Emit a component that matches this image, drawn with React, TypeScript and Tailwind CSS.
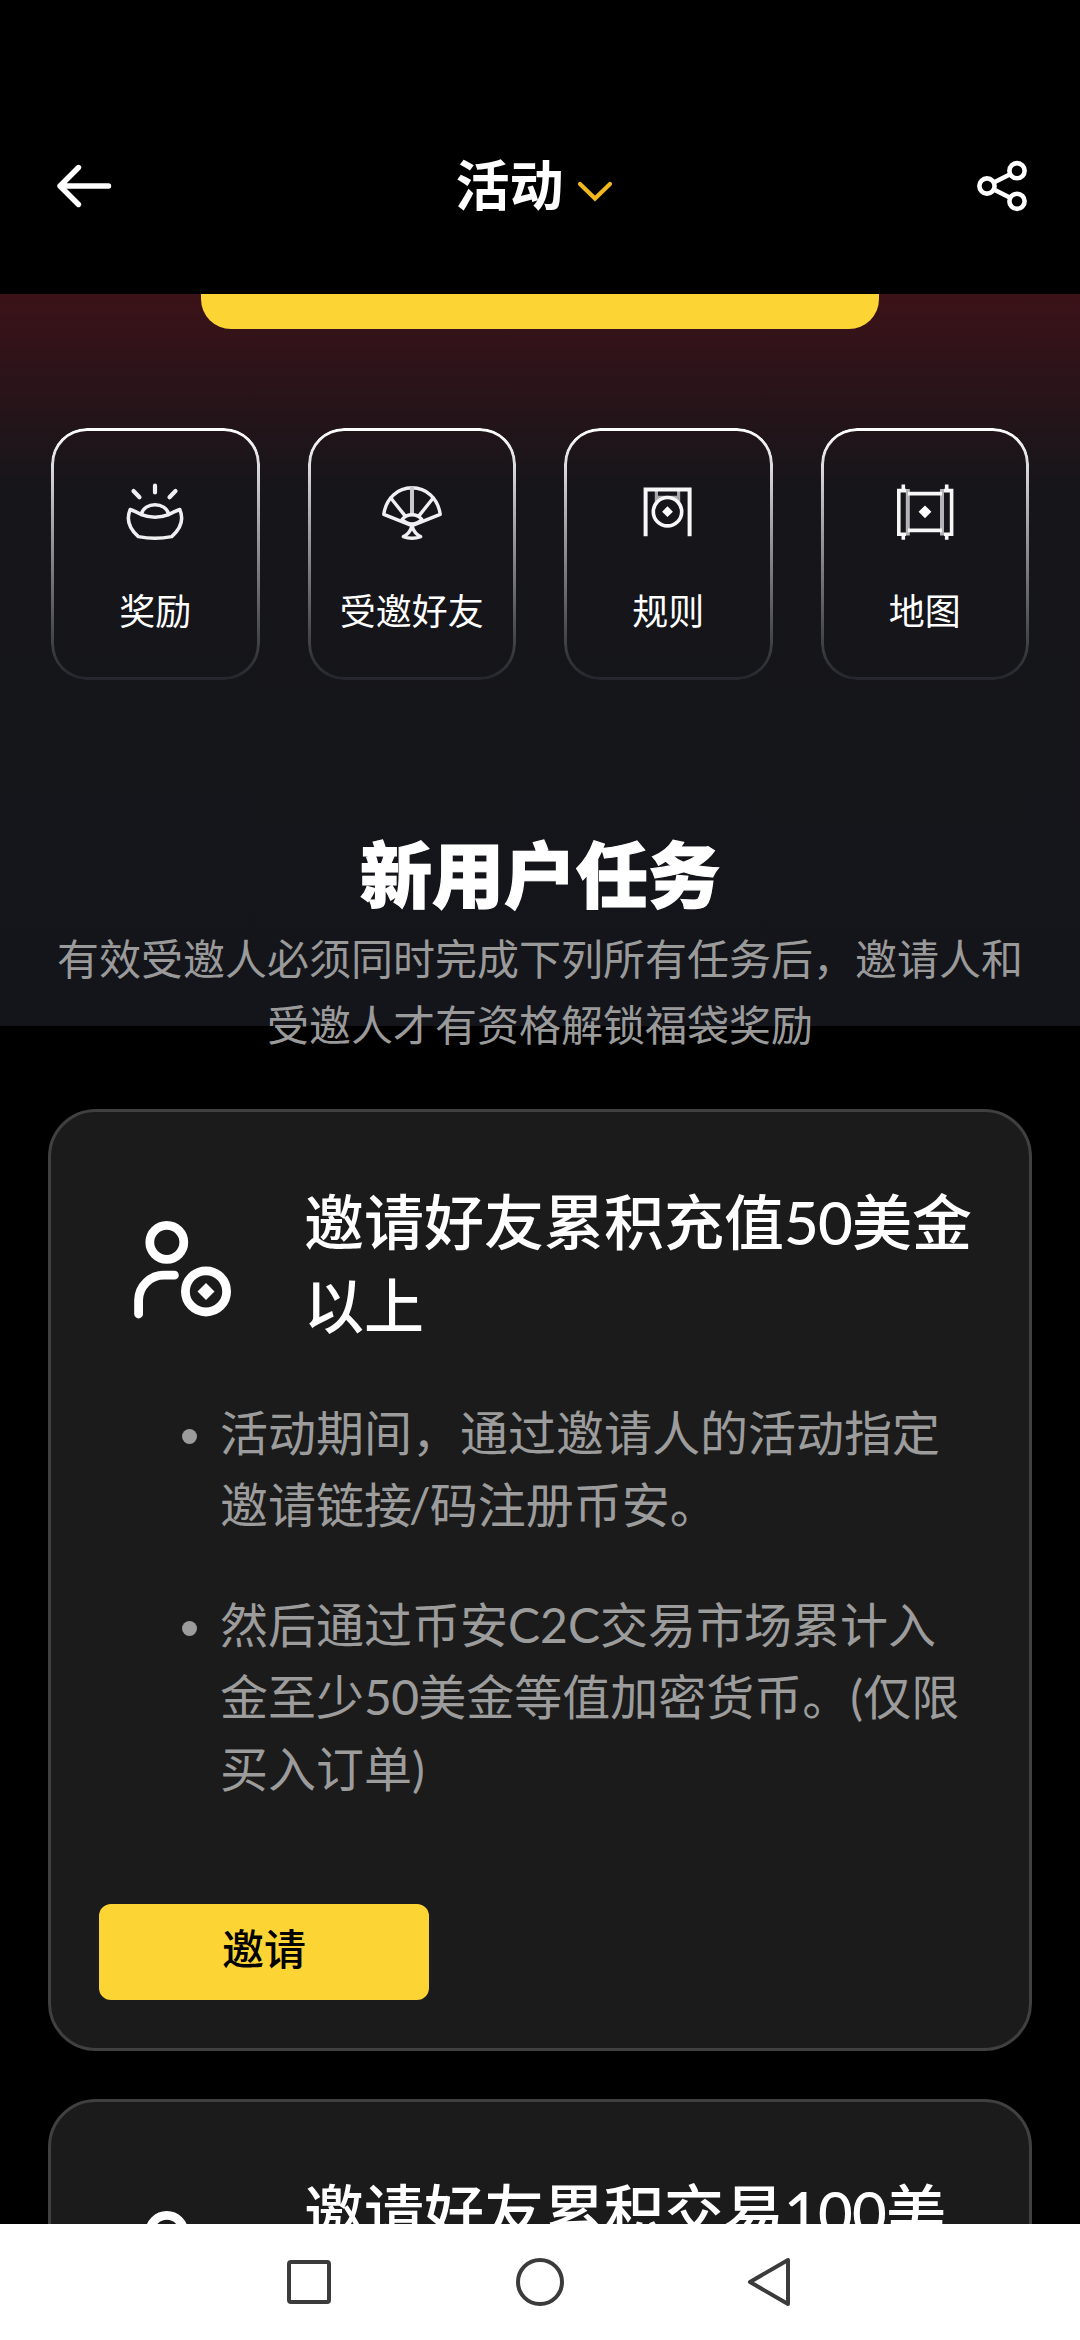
const actions = [
  { title: "奖励", icon: <IngotIcon /> },
  { title: "受邀好友", icon: <FanIcon /> },
  { title: "规则", icon: <GongIcon /> },
  { title: "地图", icon: <ScrollIcon /> },
];

const Num = ({ children }: any) => <span className="tracking-[-0.014em]">{children}</span>;

const tasks = [
  {
    title: [<>邀请好友累积充值<Num>50</Num>美金</>, "以上"],
    items: [
      [
        "活动期间，通过邀请人的活动指定",
        <>邀请链接<span className="mr-[-1px] ml-[-3px]">/</span>码注册币安。</>,
      ],
      [
        "然后通过币安C2C交易市场累计入",
        <>金至少<Num>50</Num>美金等值加密货币。(仅限</>,
        "买入订单)",
      ],
    ],
    button: "邀请",
  },
  {
    title: [<>邀请好友累积交易<Num>100</Num>美</>],
    items: [],
  },
];

function IngotIcon() {
  return (
    <svg width="72" height="72" viewBox="0 0 72 72" fill="none" stroke="#f0f0f2" strokeWidth="3.5" strokeLinecap="round" strokeLinejoin="round">
      <path d="M36 9.5V16.5M14.5 15L20.5 21.2M56.5 15L50.5 21.2" strokeWidth="4.2" />
      <path d="M11.2 33.5Q16 35 22.3 38.6Q29 41.2 36 41.2Q43 41.2 49.7 38.6Q56 35 60.8 33.5Q67 48 52.7 60.6Q44 62.3 36 62.3Q28 62.3 19.3 60.6Q5 48 11.2 33.5Z" />
      <path d="M22.3 38.4C25 25.5 47 25.5 49.7 38.4" />
    </svg>
  );
}

function FanIcon() {
  return (
    <svg width="72" height="72" viewBox="0 0 72 72" fill="none" stroke="#f0f0f2" strokeWidth="3.4" strokeLinecap="round" strokeLinejoin="round">
      <path d="M36 49.7L7.8 38.3C10 22 22 11.8 36 11.8S62 22 64.2 38.3Z" />
      <path d="M14.8 22L28.7 39.4M57.2 22L43.3 39.4" />
      <path d="M36 12V38" stroke="#c9c9cd" strokeWidth="4" />
      <path d="M26 43.5Q30 38.8 36 38.8T46 43.5Q41 48 36 48T26 43.5Z" />
      <path d="M36 50Q33.5 58 27.3 60.6Q36 64 44.7 60.6Q38.5 58 36 50Z" />
    </svg>
  );
}

function GongIcon() {
  return (
    <svg width="72" height="72" viewBox="0 0 72 72" fill="none" stroke="#f7f7f8" strokeWidth="4">
      <path d="M24.4 14V27M46.6 14V27M26 21.4H45" stroke="#a9a9ad" strokeWidth="3.2" />
      <path d="M13.6 60.3V13.6H57.6V60.3" />
      <circle cx="35.5" cy="35.7" r="14.2" strokeWidth="3.6" />
      <path d="M35.5 30.3L40.9 35.7L35.5 41.1L30.1 35.7Z" fill="#fff" stroke="none" />
    </svg>
  );
}

function ScrollIcon() {
  return (
    <svg width="72" height="72" viewBox="0 0 72 72" fill="none" stroke="#f7f7f8" strokeWidth="3.6">
      <path d="M18.8 13V59.5M53 13V59.5" stroke="#b4b4b8" strokeWidth="4" />
      <path d="M17 14.6H9.8V58.2H17M55 14.6H62.6V58.2H55" />
      <path d="M14.3 8.5V14M57.7 8.5V14M14.3 58V63.7M57.7 58V63.7" />
      <path d="M19 17.6H53M19 54.4H53" />
      <path d="M36 29.4L42.4 35.8L36 42.2L29.6 35.8Z" fill="#fff" stroke="none" />
    </svg>
  );
}

function FriendIcon() {
  return (
    <svg className="shrink-0" width="120" height="108" viewBox="0 0 120 108" fill="none" stroke="#fff" strokeWidth="8.8" strokeLinecap="round">
      <circle cx="49.8" cy="24.3" r="17" />
      <path d="M21.6 96V82A25.5 25.5 0 0 1 47.1 57.2H57.4" />
      <circle cx="89" cy="73.4" r="20.6" />
      <path d="M89 64.9L97.5 73.4L89 81.9L80.5 73.4Z" fill="#fff" stroke="none" />
    </svg>
  );
}

const Header = () => {
  return (
    <header className="h-[294px] shrink-0 bg-black pt-[148px]">
      <div className="flex h-[76px] items-center justify-between px-[52px]">
        <svg width="64" height="56" viewBox="0 0 64 56" fill="none" stroke="#fff" strokeWidth="5.4" strokeLinecap="round" strokeLinejoin="round">
          <path d="M56.5 28H8M26.5 9.5L8 28L26.5 46.5" />
        </svg>
        <div className="flex items-center gap-[13px] pr-[22px]">
          <h1 className="text-[54px] leading-[76px] font-bold text-white">活动</h1>
          <svg className="mt-[12px]" width="36" height="24" viewBox="0 0 36 24" fill="none" stroke="#f0b81c" strokeWidth="4.2" strokeLinecap="round">
            <path d="M3 4L18 18.6L33 4" />
          </svg>
        </div>
        <svg width="54" height="54" viewBox="0 0 54 54" fill="none" stroke="#fff" strokeWidth="4.6">
          <circle cx="43" cy="11.7" r="7.6" />
          <circle cx="13" cy="27" r="7.6" />
          <circle cx="43" cy="42.3" r="7.6" />
          <path d="M19.8 23.5L36.2 15.2M19.8 30.5L36.2 38.8" />
        </svg>
      </div>
    </header>
  );
};

const ActionCard = ({ action }: any) => {
  return (
    <button className="relative flex h-[252px] flex-1 flex-col items-center rounded-[36px] pt-[48px]">
      {/* outline fading from white to nearly nothing */}
      <span className="absolute inset-0 rounded-[36px] bg-linear-to-b from-white to-[#25262d] p-[3px] [mask:linear-gradient(#000_0_0)_content-box_exclude,linear-gradient(#000_0_0)]" />
      {action.icon}
      <span className="mt-[36px] text-[36px] leading-[54px] text-white">{action.title}</span>
    </button>
  );
};

const TaskCard = ({ task }: any) => {
  return (
    <article className="h-[942px] shrink-0 rounded-[48px] border-[3px] border-[#404040] bg-[#1b1b1b] px-[48px] pt-[68px]">
      <div className="flex pl-[18px]">
        <div className="w-[187px] shrink-0 pt-[38px]">
          <FriendIcon />
        </div>
        <h3 className="h-[168px] text-[60px] leading-[84px] font-medium whitespace-nowrap text-white">
          {task.title.map((line: any, i: number) => (
            <div key={i}>{line}</div>
          ))}
        </h3>
      </div>
      <ul className="mt-[49px] flex h-[408px] flex-col gap-[48px] pl-[83px] text-[48px] leading-[72px] whitespace-nowrap text-[#9c9c9c]">
        {task.items.map((item: any[], i: number) => (
          <li key={i} className="flex gap-[23px]">
            <span className="mt-[32px] h-[15px] w-[15px] rounded-full bg-[#9c9c9c]" />
            <div>
              {item.map((line, j) => (
                <div key={j}>{line}</div>
              ))}
            </div>
          </li>
        ))}
      </ul>
      {task.button && (
        <button className="mt-[99px] h-[96px] w-[330px] rounded-[12px] bg-[#fcd535] pb-[5px] text-[42px] font-medium text-black">
          {task.button}
        </button>
      )}
    </article>
  );
};

const SystemBar = () => {
  return (
    <nav className="flex h-[116px] shrink-0 items-center justify-center gap-[174px] bg-white">
      <svg width="56" height="56" viewBox="0 0 56 56" fill="none" stroke="#3b3b3b" strokeWidth="4">
        <rect x="7" y="8" width="40" height="40" rx="2" />
      </svg>
      <svg width="56" height="56" viewBox="0 0 56 56" fill="none" stroke="#3b3b3b" strokeWidth="4">
        <circle cx="28" cy="28" r="22" />
      </svg>
      <svg width="56" height="56" viewBox="0 0 56 56" fill="none" stroke="#3b3b3b" strokeWidth="4" strokeLinejoin="round">
        <path d="M46 6V50L8 28Z" />
      </svg>
    </nav>
  );
};

export default function App() {
  return (
    <div className="flex h-[2340px] w-[1080px] flex-col overflow-hidden bg-black font-['Lato','Noto_Sans_CJK_SC',sans-serif]" lang="zh-CN">
      <Header />
      <main className="flex min-h-0 flex-1 flex-col overflow-hidden bg-[linear-gradient(#3b1218_0,#261419_110px,#15151a_200px,#14151a_100%)] bg-[length:100%_732px] bg-no-repeat">
        <div className="mx-auto h-[35px] w-[678px] shrink-0 rounded-b-[30px] bg-[#fcd535]" />
        <section className="mt-[99px] flex shrink-0 gap-[48px] px-[51px]">
          {actions.map((action) => (
            <ActionCard key={action.title} action={action} />
          ))}
        </section>
        <section className="mt-[142px] shrink-0 text-center">
          <h2 className="text-[72px] leading-[104px] font-black text-white [-webkit-text-stroke:1.2px_white]">新用户任务</h2>
          <p className="text-[42px] leading-[66px] whitespace-nowrap text-[#9a9a9a]">
            有效受邀人必须同时完成下列所有任务后，邀请人和
            <br />
            受邀人才有资格解锁福袋奖励
          </p>
        </section>
        <section className="mt-[51px] flex shrink-0 flex-col gap-[48px] px-[48px]">
          {tasks.map((task, i) => (
            <TaskCard key={i} task={task} />
          ))}
        </section>
      </main>
      <SystemBar />
    </div>
  );
}
